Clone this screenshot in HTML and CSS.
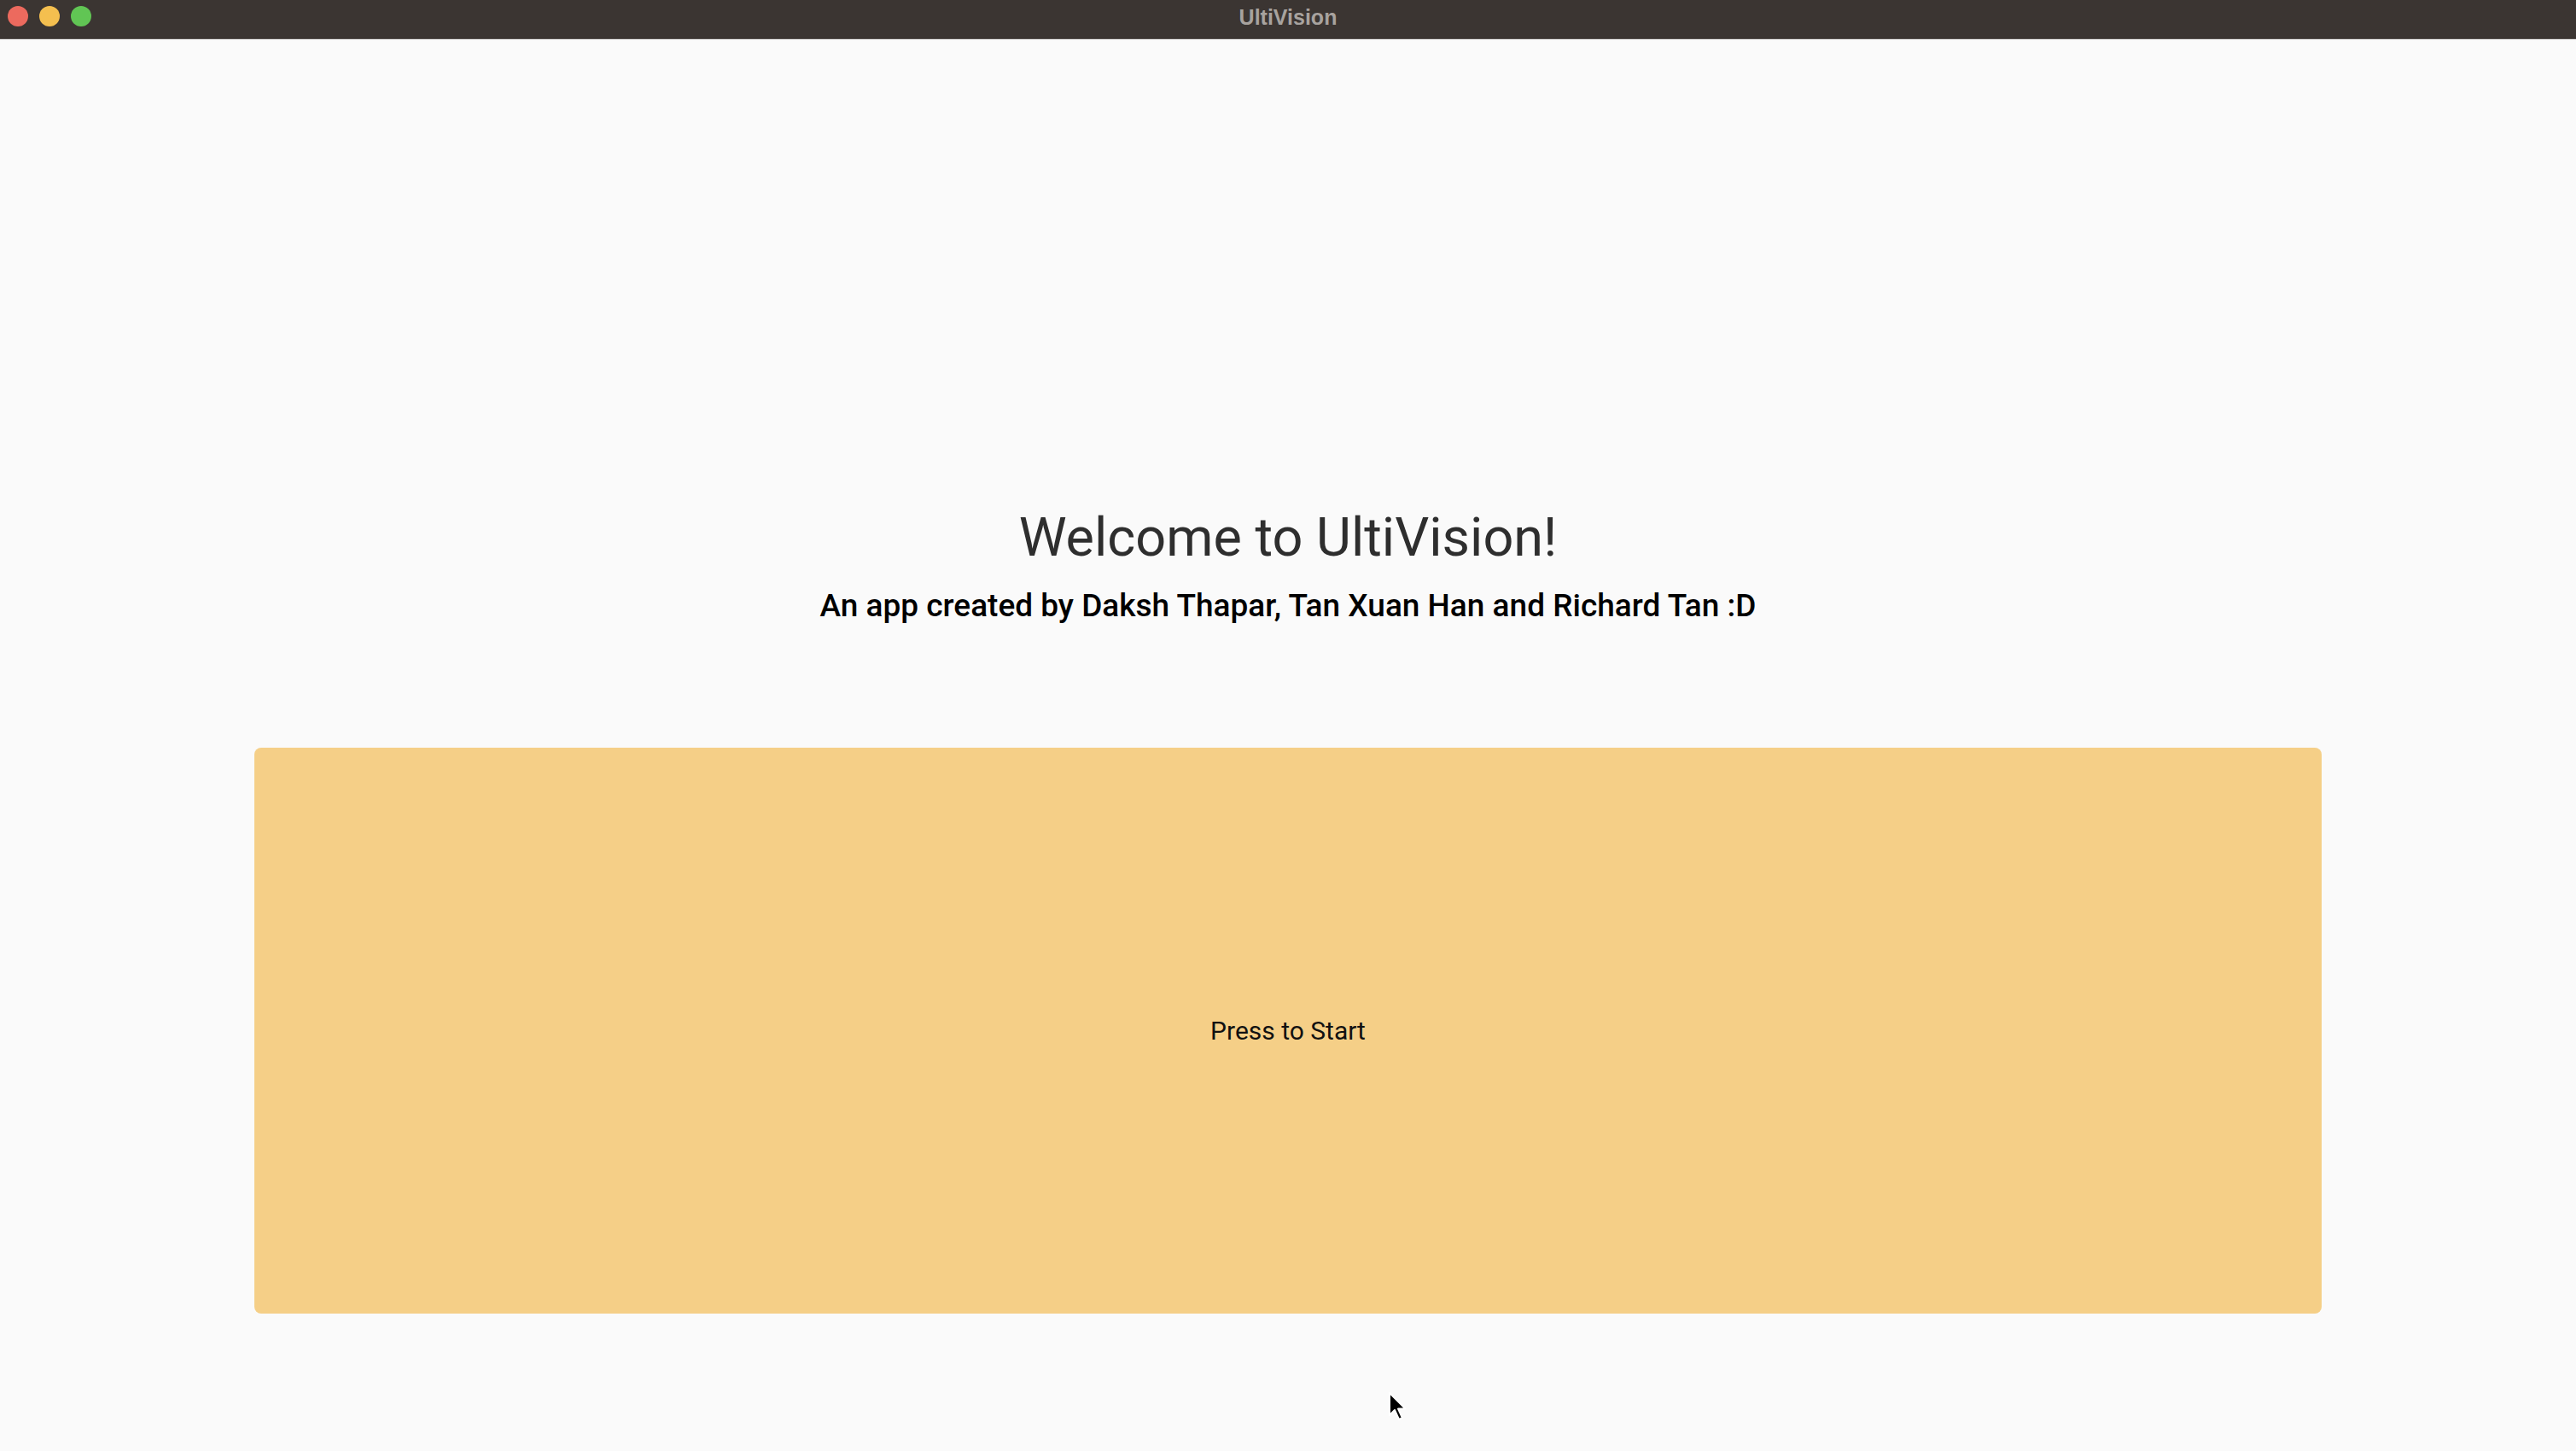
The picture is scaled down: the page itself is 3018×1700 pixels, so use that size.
FILE: index.html
```html
<!DOCTYPE html>
<html lang="en">
<head>
<meta charset="utf-8">
<title>UltiVision</title>
<link rel="stylesheet" href="styles.css">
</head>
<body>
<div class="window">
  <header class="titlebar">
    <div class="lights">
      <span class="light red"></span>
      <span class="light yellow"></span>
      <span class="light green"></span>
    </div>
    <div class="title">UltiVision</div>
  </header>
  <main class="content">
    <h1 class="heading">Welcome to UltiVision!</h1>
    <p class="subtitle">An app created by Daksh Thapar, Tan Xuan Han and Richard Tan :D</p>
    <button class="start">Press to Start</button>
  </main>
  <svg class="cursor" width="24" height="36" viewBox="0 0 12 18">
    <path d="M1 1 L1 14 L4 11 L6.5 16.5 L8.5 15.6 L6 10.3 L10.3 10.3 Z" fill="#000" stroke="#fff" stroke-width="1" stroke-linejoin="round"/>
  </svg>
</div>
</body>
</html>
```
FILE: styles.css
```css
html, body {
  margin: 0;
  padding: 0;
  background: #fafafa;
}
.window {
  position: relative;
  width: 3018px;
  height: 1700px;
  display: flex;
  flex-direction: column;
  overflow: hidden;
  font-family: Roboto, "Noto Sans", sans-serif;
}
.titlebar {
  position: relative;
  height: 45px;
  flex: 0 0 45px;
  background: #3b3532;
  border-bottom: 1px solid #5a5552;
  display: flex;
  align-items: center;
  justify-content: center;
}
.lights {
  position: absolute;
  left: 9px;
  top: 7px;
  display: flex;
  gap: 13px;
}
.light {
  width: 24px;
  height: 24px;
  border-radius: 50%;
}
.red { background: #ec6a5e; }
.yellow { background: #f4bf4f; }
.green { background: #61c554; }
.title {
  font-family: "Liberation Sans", Arial, sans-serif;
  font-weight: 700;
  font-size: 25px;
  color: #a8a39f;
  margin-top: -5px;
}
.content {
  flex: 1;
  display: flex;
  flex-direction: column;
  align-items: center;
  padding-top: 546px;
}
.heading {
  margin: 0;
  font-size: 63px;
  line-height: 76px;
  font-weight: 400;
  color: #2e2e2e;
}
.subtitle {
  margin: 20px 0 0;
  font-size: 37px;
  line-height: 44px;
  font-weight: 500;
  color: #000;
}
.start {
  margin-top: 144px;
  width: 2422px;
  height: 663px;
  border: none;
  border-radius: 8px;
  background: #f5cf87;
  font-family: Roboto, "Noto Sans", sans-serif;
  font-size: 30px;
  color: #111;
  padding: 0;
}
.cursor {
  position: absolute;
  left: 1626px;
  top: 1630px;
}
```
